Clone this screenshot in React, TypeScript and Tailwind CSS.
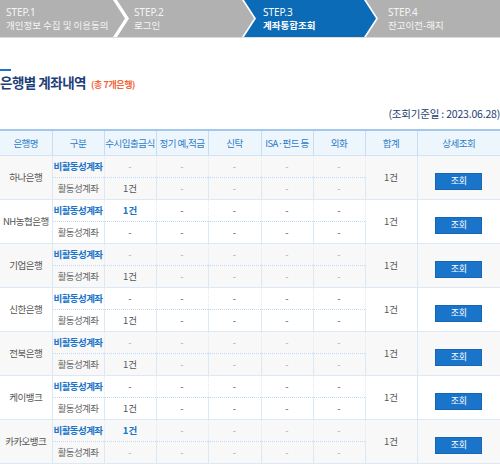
import React from "react";

type Bank = {
  name: string;
  inactive: string[];
  active: string[];
  total: string;
};

const banks: Bank[] = [
  { name: "하나은행", inactive: ["-", "-", "-", "-", "-"], active: ["1건", "-", "-", "-", "-"], total: "1건" },
  { name: "NH농협은행", inactive: ["1건", "-", "-", "-", "-"], active: ["-", "-", "-", "-", "-"], total: "1건" },
  { name: "기업은행", inactive: ["-", "-", "-", "-", "-"], active: ["1건", "-", "-", "-", "-"], total: "1건" },
  { name: "신한은행", inactive: ["-", "-", "-", "-", "-"], active: ["1건", "-", "-", "-", "-"], total: "1건" },
  { name: "전북은행", inactive: ["-", "-", "-", "-", "-"], active: ["1건", "-", "-", "-", "-"], total: "1건" },
  { name: "케이뱅크", inactive: ["-", "-", "-", "-", "-"], active: ["1건", "-", "-", "-", "-"], total: "1건" },
  { name: "카카오뱅크", inactive: ["1건", "-", "-", "-", "-"], active: ["-", "-", "-", "-", "-"], total: "1건" },
];

const headers = ["은행명", "구분", "수시입출금식", "정기 예,적금", "신탁", "ISA·펀드 등", "외화", "합계", "상세조회"];

function Steps() {
  return (
    <div className="border-b border-[#dcdcdc]">
      <div className="flex h-[37px] text-[#f5f5f5]">
        <div className="w-[125px] shrink-0 bg-[#b1b1b1] pl-[6px] pt-[6px] [clip-path:polygon(0_0,calc(100%_-_12px)_0,100%_50%,calc(100%_-_12px)_100%,0_100%)]">
          <div className="font-['Noto_Sans',sans-serif] text-[10px] leading-[12px]">STEP.1</div>
          <div className="mt-[1px] text-[9.5px] leading-[12px] tracking-[0px] whitespace-nowrap">개인정보 수집 및 이용동의</div>
        </div>
        <div className="w-[137px] shrink-0 -ml-[8px] bg-[#b1b1b1] pl-[17px] pt-[6px] [clip-path:polygon(0_0,calc(100%_-_12px)_0,100%_50%,calc(100%_-_12px)_100%,0_100%,12px_50%)]">
          <div className="font-['Noto_Sans',sans-serif] text-[10px] leading-[12px]">STEP.2</div>
          <div className="mt-[1px] text-[9.5px] leading-[12px]">로그인</div>
        </div>
        <div className="w-[132px] shrink-0 -ml-[10px] bg-[#0b6bb7] pl-[19px] pt-[6px] text-white [clip-path:polygon(0_0,calc(100%_-_12px)_0,100%_50%,calc(100%_-_12px)_100%,0_100%,12px_50%)]">
          <div className="font-['Noto_Sans',sans-serif] text-[10px] leading-[12px]">STEP.3</div>
          <div className="mt-[1px] text-[9.5px] leading-[12px] font-bold">계좌통합조회</div>
        </div>
        <div className="flex-1 -ml-[10px] bg-[#b1b1b1] pl-[22px] pt-[6px] [clip-path:polygon(0_0,100%_0,100%_100%,0_100%,12px_50%)]">
          <div className="font-['Noto_Sans',sans-serif] text-[10px] leading-[12px]">STEP.4</div>
          <div className="mt-[1px] text-[9.5px] leading-[12px]">잔고이전-해지</div>
        </div>
      </div>
    </div>
  );
}

export default function App() {
  return (
    <div className="w-[500px] h-[464px] overflow-hidden bg-white font-['Noto_Sans_CJK_KR',sans-serif]">
      <Steps />

      <div className="mt-[31px] h-[2px] w-[11px] bg-[#1a74c9]" />
      <div className="mt-[3px] flex items-baseline">
        <h2 className="text-[13.5px] font-bold leading-[16px] tracking-[-0.5px] text-[#1d3e78]">은행별 계좌내역</h2>
        <span className="ml-[5px] text-[9px] font-bold tracking-[-0.4px] text-[#f1663a]">(총 7개은행)</span>
      </div>

      <div className="mt-[15px] text-right text-[10.5px] leading-[14px] tracking-[-0.2px] text-[#1f3d70]">
        (조회기준일 : 2023.06.28)
      </div>

      <table className="mt-[8px] w-[500px] table-fixed border-collapse border-t-2 border-[#a3c8ec]">
        <colgroup>
          <col className="w-[52px]" />
          <col className="w-[52px]" />
          <col className="w-[52px]" />
          <col className="w-[52px]" />
          <col className="w-[53px]" />
          <col className="w-[52px]" />
          <col className="w-[52px]" />
          <col className="w-[52px]" />
          <col />
        </colgroup>
        <thead>
          <tr className="h-[26px] bg-[#eef6fd]">
            {headers.map((h, i) => (
              <th
                key={h}
                className={
                  "border-b border-[#d3e3f1] px-0 text-center text-[9.5px] font-normal tracking-[-0.5px] whitespace-nowrap text-[#2a7bc7] " +
                  (i < headers.length - 1 ? "border-r border-r-[#c6ddf2]" : "")
                }
              >
                {h}
              </th>
            ))}
          </tr>
        </thead>
        <tbody>
          {banks.map((bank, idx) => {
            const shaded = idx % 2 === 0;
            const bg = shaded ? "bg-[#f8f8f8]" : "bg-white";
            return (
              <React.Fragment key={bank.name}>
                <tr className={"h-[22px] " + bg}>
                  <td
                    rowSpan={2}
                    className="border-r border-b border-[#dce8f3] text-center text-[9.5px] tracking-[-0.5px] text-[#555]"
                  >
                    {bank.name}
                  </td>
                  <td className="border-r border-[#dce8f3] border-b border-b-[#c3dbf0] border-dotted text-center text-[9.5px] font-bold tracking-[-0.6px] text-[#1a74c9]">
                    비활동성계좌
                  </td>
                  {bank.inactive.map((v, i) => (
                    <td
                      key={i}
                      className={
                        "border-r border-[#dce8f3] border-b border-b-[#c3dbf0] border-dotted text-center text-[9.5px] " +
                        (v !== "-" ? "font-bold text-[#1a74c9]" : shaded ? "text-[#aaa]" : "text-[#555]")
                      }
                    >
                      {v}
                    </td>
                  ))}
                  <td
                    rowSpan={2}
                    className="border-r border-b border-[#dce8f3] text-center text-[9.5px] text-[#555]"
                  >
                    {bank.total}
                  </td>
                  <td rowSpan={2} className="border-b border-[#dce8f3] text-center">
                    <button className="h-[17px] w-[47px] border border-[#1766b3] bg-[#1a74c9] text-[9px] tracking-[-0.3px] text-white">
                      조회
                    </button>
                  </td>
                </tr>
                <tr className={"h-[22px] " + bg}>
                  <td className="border-r border-b border-[#dce8f3] text-center text-[9.5px] tracking-[-0.6px] text-[#666]">
                    활동성계좌
                  </td>
                  {bank.active.map((v, i) => (
                    <td
                      key={i}
                      className={
                        "border-r border-b border-[#dce8f3] text-center text-[9.5px] " +
                        (v !== "-" ? "text-[#555]" : shaded ? "text-[#aaa]" : "text-[#555]")
                      }
                    >
                      {v}
                    </td>
                  ))}
                </tr>
              </React.Fragment>
            );
          })}
        </tbody>
      </table>
    </div>
  );
}
